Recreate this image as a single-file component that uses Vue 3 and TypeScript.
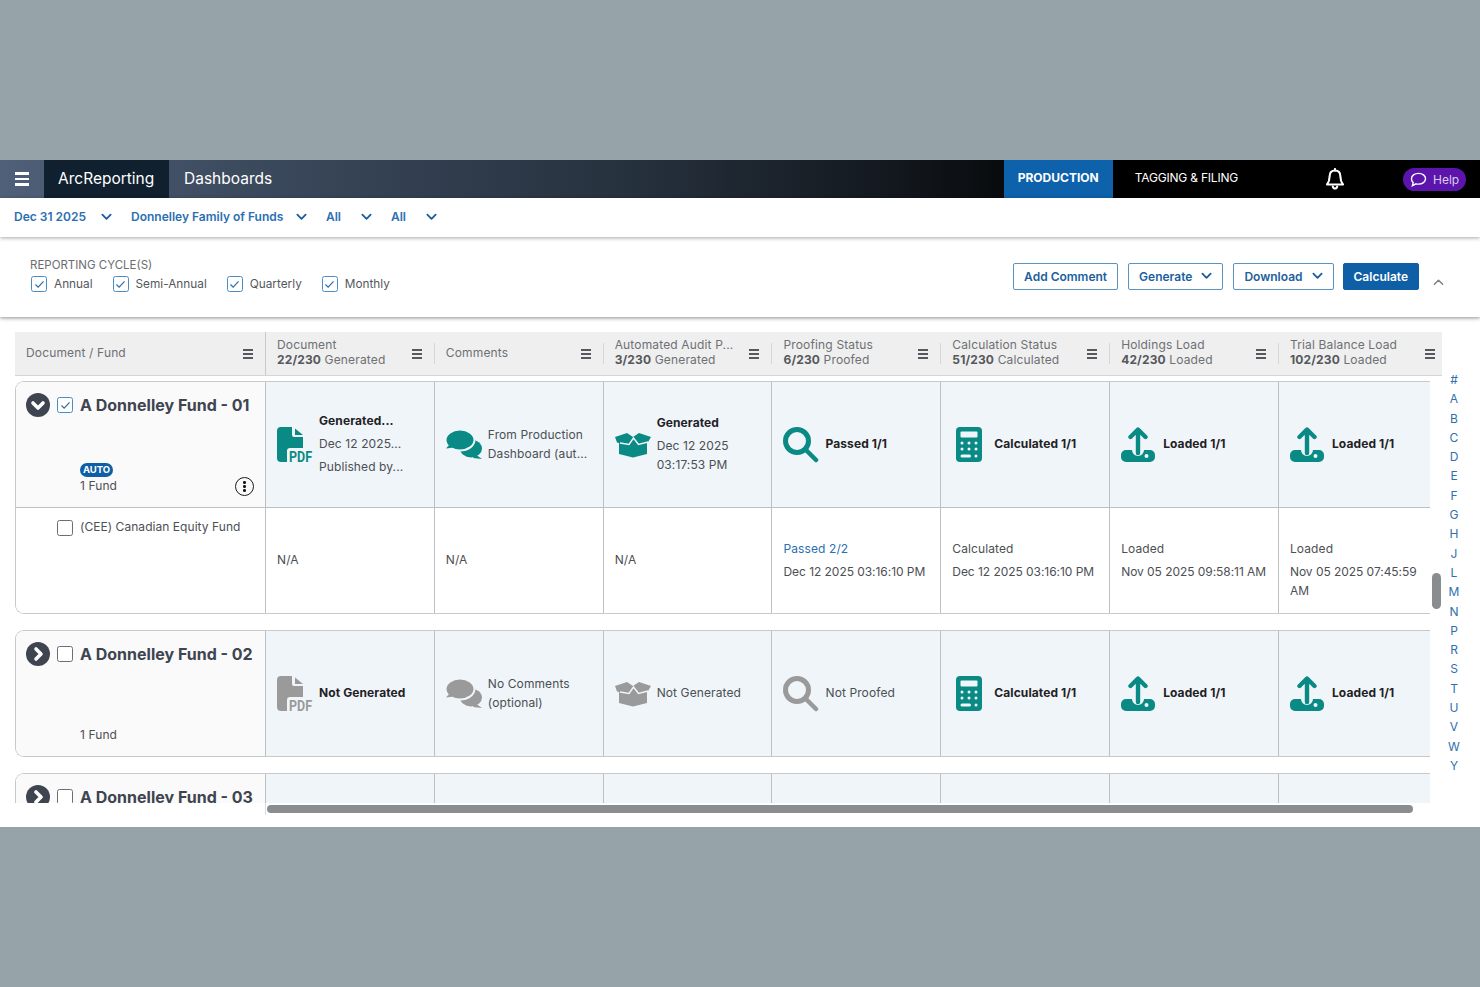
<template>
  <div class="page">
    <div class="band"></div>
    <div class="app">
      <nav class="topnav">
        <button class="burger" aria-label="Menu">
          <span></span><span></span><span></span>
        </button>
        <div class="brand">ArcReporting</div>
        <div class="nav-link">Dashboards</div>
        <div class="nav-right">
          <div class="tab active">PRODUCTION</div>
          <div class="tab">TAGGING &amp; FILING</div>
          <svg class="bell" viewBox="0 0 20 22" fill="none" stroke="#fff" stroke-width="2.100" stroke-linejoin="round">
            <path d="M10 2.500c-3.600 0-5.400 2.600-5.400 6 0 4.200-.9 5.900-2.600 8h16c-1.700-2.100-2.600-3.800-2.600-8 0-3.400-1.800-6-5.400-6z" />
            <path d="M10 1v1.500M7.800 18.500c.3 1.300 1.100 2 2.200 2s1.900-.7 2.200-2" stroke-linecap="round" />
          </svg>
          <div class="help">
            <svg viewBox="0 0 18 16" fill="none" stroke="#fff" stroke-width="1.500">
              <path d="M9 1.500c4.200 0 7.500 2.400 7.500 5.700S13.200 12.900 9 12.900c-.9 0-1.800-.1-2.600-.3L2.500 14.500l.8-3.200C2 10.200 1.500 8.800 1.500 7.200 1.500 3.900 4.800 1.500 9 1.500z" />
            </svg>
            Help
          </div>
        </div>
      </nav>

      <div class="filters">
        <div v-for="f in filters" :key="f.label + f.width" class="filter" :style="{ width: f.width + 'px' }">
          <span>{{ f.label }}</span>
          <svg class="chev" viewBox="0 0 12 8" fill="none" stroke="currentColor" stroke-width="2" stroke-linecap="round" stroke-linejoin="round"><path d="M1.500 1.500 6 6l4.500-4.500" /></svg>
        </div>
      </div>

      <div class="toolbar">
        <div class="cycles">
          <div class="cycle-title">REPORTING CYCLE(S)</div>
          <div class="cycle-list">
            <label v-for="c in cycles" :key="c" class="cycle">
              <span class="box checked">
                <svg viewBox="0 0 12 10" fill="none" stroke="currentColor" stroke-width="1.300"><path d="M1.500 5 4.500 8l6-6.500" /></svg>
              </span>
              {{ c }}
            </label>
          </div>
        </div>
        <div class="actions">
          <button class="btn">Add Comment</button>
          <button class="btn">Generate
            <svg class="chev" viewBox="0 0 12 8" fill="none" stroke="currentColor" stroke-width="2" stroke-linecap="round" stroke-linejoin="round"><path d="M1.500 1.500 6 6l4.500-4.500" /></svg>
          </button>
          <button class="btn">Download
            <svg class="chev" viewBox="0 0 12 8" fill="none" stroke="currentColor" stroke-width="2" stroke-linecap="round" stroke-linejoin="round"><path d="M1.500 1.500 6 6l4.500-4.500" /></svg>
          </button>
          <button class="btn primary">Calculate</button>
          <svg class="collapse" viewBox="0 0 12 8" fill="none" stroke="#7a7f85" stroke-width="1.600" stroke-linecap="round" stroke-linejoin="round"><path d="M1.500 6.500 6 2l4.500 4.500" /></svg>
        </div>
      </div>

      <div class="content">
        <div class="grid-area">
          <div class="grid-head">
            <div v-for="h in headers" :key="h.title" class="head-cell">
              <div class="head-text">
                <div class="head-title">{{ h.title }}</div>
                <div v-if="h.count" class="head-sub"><b>{{ h.count }}</b> {{ h.state }}</div>
              </div>
              <span class="head-menu"><i></i><i></i><i></i></span>
            </div>
          </div>

          <div class="grid-body">
            <div v-for="g in groups" :key="g.name" class="group">
              <div class="line parent">
                <div class="fund-cell">
                  <div class="fund-head">
                    <span class="toggle">
                      <svg viewBox="0 0 24 24" fill="none" stroke="#fff" stroke-width="3.600" stroke-linecap="round" stroke-linejoin="round">
                        <path :d="g.open ? 'M7 10l5 5 5-5' : 'M10 7l5 5-5 5'" />
                      </svg>
                    </span>
                    <span class="box" :class="{ checked: g.checked }">
                      <svg v-if="g.checked" viewBox="0 0 12 10" fill="none" stroke="currentColor" stroke-width="1.300"><path d="M1.500 5 4.500 8l6-6.500" /></svg>
                    </span>
                    <span class="fund-name">{{ g.name }}</span>
                  </div>
                  <div class="fund-meta">
                    <div>
                      <span v-if="g.auto" class="auto">AUTO</span>
                      <div class="fund-count">1 Fund</div>
                    </div>
                    <span v-if="g.auto" class="info"><i></i><i></i><i></i></span>
                  </div>
                </div>
                <div v-for="(c, i) in g.cells" :key="i" class="cell" :class="{ muted: c.muted }">
                  <div v-if="c.icon" class="icon-slot">
                    <svg v-if="c.icon === 'pdf'" class="pdf" width="42" height="40" viewBox="0 0 42 40" fill="currentColor">
                      <path d="M4 0H15V8a2 2 0 0 0 2 2H26V21H13a3 3 0 0 0-3 3V35H4a4 4 0 0 1-4-4V4a4 4 0 0 1 4-4z" />
                      <path d="M18 1.500 26 8H18z" />
                      <text x="12" y="35" font-family="'Roboto',sans-serif" font-size="14.500" font-weight="700" textLength="23" lengthAdjust="spacingAndGlyphs">PDF</text>
                    </svg>
                    <svg v-else-if="c.icon === 'chat'" width="36" height="29" viewBox="0 0 36 29" fill="currentColor">
                      <ellipse cx="25" cy="18.500" rx="11" ry="9" />
                      <path d="M29 24l7 5-9-1z" />
                      <ellipse class="cut" cx="14" cy="10" rx="14.500" ry="10.500" />
                      <path d="M4 14 0 18.500l8-1z" />
                    </svg>
                    <svg v-else-if="c.icon === 'box'" width="36" height="26" viewBox="0 0 36 26" fill="currentColor">
                      <path d="M0 5 12 1l6 4 6-4 12 4-3 5-1 .3V22l-14 3.500L4 22V11l-2-.5z" />
                      <path class="crease" d="M5 11l9 1.500L18.500 6l5 6.500 9.500-2.500" />
                    </svg>
                    <svg v-else-if="c.icon === 'search'" width="36" height="36" viewBox="0 0 36 36" fill="none" stroke="currentColor">
                      <circle cx="14" cy="14" r="11.500" stroke-width="5" />
                      <path d="M23.500 23.500 33 33" stroke-width="4.500" stroke-linecap="round" />
                    </svg>
                    <svg v-else-if="c.icon === 'calc'" class="calc" width="26" height="35" viewBox="0 0 26 35" fill="currentColor">
                      <rect width="26" height="35" rx="4" />
                      <rect x="4.500" y="4.500" width="17" height="6" rx="1" class="hole" />
                      <g class="hole">
                        <circle cx="6" cy="16" r="1.500" /><circle cx="13" cy="16" r="1.500" /><circle cx="20" cy="16" r="1.500" />
                        <circle cx="6" cy="22" r="1.500" /><circle cx="13" cy="22" r="1.500" /><circle cx="20" cy="22" r="1.500" />
                        <rect x="4.500" y="27.500" width="10.500" height="3" rx="1.500" /><circle cx="20" cy="29" r="1.500" />
                      </g>
                    </svg>
                    <svg v-else-if="c.icon === 'upload'" width="34" height="35" viewBox="0 0 34 35" fill="currentColor">
                      <path d="M5 23h6a6 6 0 0 0 12 0h6a5 5 0 0 1 5 5v2a5 5 0 0 1-5 5H5a5 5 0 0 1-5-5v-2a5 5 0 0 1 5-5z" />
                      <circle cx="25.500" cy="29" r="2" class="hole" />
                      <path d="M17 26V3M9.500 10 17 2.500 24.500 10" fill="none" stroke="currentColor" stroke-width="4.400" stroke-linecap="round" stroke-linejoin="round" />
                    </svg>
                  </div>
                  <div class="cell-text" :class="c.kind">
                    <div v-for="(t, j) in c.lines" :key="j">{{ t }}</div>
                  </div>
                </div>
              </div>

              <div v-if="g.children" class="line child">
                <div class="fund-cell sub">
                  <span class="box"></span>
                  <span>(CEE) Canadian Equity Fund</span>
                </div>
                <div v-for="(c, i) in g.children" :key="i" class="cell plain">
                  <div v-if="c.length === 1" class="single">{{ c[0] }}</div>
                  <div v-else class="stack">
                    <div class="stack-top" :class="{ link: c[0].startsWith('Passed') }">{{ c[0] }}</div>
                    <div class="stamp">{{ c[1] }}</div>
                  </div>
                </div>
              </div>
            </div>
          </div>

          <div class="vthumb"></div>
          <div class="hscroll"><div class="hthumb"></div></div>
        </div>

        <div class="alpha">
          <span v-for="a in letters" :key="a">{{ a }}</span>
        </div>
      </div>
    </div>
    <div class="band"></div>
  </div>
</template>

<script setup lang="ts">
type IconName = 'pdf' | 'chat' | 'box' | 'search' | 'calc' | 'upload'

interface Cell {
  icon?: IconName
  lines: string[]
  kind?: string
  muted?: boolean
}

interface Group {
  name: string
  open: boolean
  checked: boolean
  auto: boolean
  cells: Cell[]
  children?: string[][]
}

const filters = [
  { label: 'Dec 31 2025', width: 117 },
  { label: 'Donnelley Family of Funds', width: 195 },
  { label: 'All', width: 65 },
  { label: 'All', width: 65 },
]

const cycles = ['Annual', 'Semi-Annual', 'Quarterly', 'Monthly']

const headers = [
  { title: 'Document / Fund' },
  { title: 'Document', count: '22/230', state: 'Generated' },
  { title: 'Comments' },
  { title: 'Automated Audit P...', count: '3/230', state: 'Generated' },
  { title: 'Proofing Status', count: '6/230', state: 'Proofed' },
  { title: 'Calculation Status', count: '51/230', state: 'Calculated' },
  { title: 'Holdings Load', count: '42/230', state: 'Loaded' },
  { title: 'Trial Balance Load', count: '102/230', state: 'Loaded' },
]

const loadedCells: Cell[] = [
  { icon: 'calc', lines: ['Calculated 1/1'], kind: 'bold' },
  { icon: 'upload', lines: ['Loaded 1/1'], kind: 'bold' },
  { icon: 'upload', lines: ['Loaded 1/1'], kind: 'bold' },
]

const groups: Group[] = [
  {
    name: 'A Donnelley Fund - 01',
    open: true,
    checked: true,
    auto: true,
    cells: [
      { icon: 'pdf', lines: ['Generated...', 'Dec 12 2025...', 'Published by...'], kind: 'first-bold wide' },
      { icon: 'chat', lines: ['From Production', 'Dashboard (aut...'] },
      { icon: 'box', lines: ['Generated', 'Dec 12 2025', '03:17:53 PM'], kind: 'first-bold' },
      { icon: 'search', lines: ['Passed 1/1'], kind: 'bold' },
      ...loadedCells,
    ],
    children: [
      ['N/A'],
      ['N/A'],
      ['N/A'],
      ['Passed 2/2', 'Dec 12 2025 03:16:10 PM'],
      ['Calculated', 'Dec 12 2025 03:16:10 PM'],
      ['Loaded', 'Nov 05 2025 09:58:11 AM'],
      ['Loaded', 'Nov 05 2025 07:45:59 AM'],
    ],
  },
  {
    name: 'A Donnelley Fund - 02',
    open: false,
    checked: false,
    auto: false,
    cells: [
      { icon: 'pdf', lines: ['Not Generated'], kind: 'bold', muted: true },
      { icon: 'chat', lines: ['No Comments', '(optional)'], muted: true },
      { icon: 'box', lines: ['Not Generated'], muted: true },
      { icon: 'search', lines: ['Not Proofed'], muted: true },
      ...loadedCells,
    ],
  },
  {
    name: 'A Donnelley Fund - 03',
    open: false,
    checked: false,
    auto: false,
    cells: Array.from({ length: 7 }, () => ({ lines: [] })),
  },
]

const letters = '# A B C D E F G H J L M N P R S T U V W Y'.split(' ')
</script>

<style>
html,
body {
  margin: 0;
  background: #96a4aa;
}
</style>

<style scoped>
.page {
  display: flex;
  flex-direction: column;
  height: 987px;
  font-family: Inter, "Liberation Sans", sans-serif;
  color: #3d4046;
}

.band {
  height: 160px;
  background: #96a4aa;
}

.app {
  height: 667px;
  background: #fff;
  display: flex;
  flex-direction: column;
  overflow: hidden;
}

.topnav {
  height: 38px;
  flex: none;
  display: flex;
  align-items: stretch;
  color: #fff;
  background: linear-gradient(90deg, #4f6079 0, #3c4a5e 240px, #27323f 620px, #12171d 900px, #000 1100px);
}

.burger {
  width: 44px;
  border: none;
  background: none;
  padding: 0 0 0 15px;
  display: flex;
  flex-direction: column;
  justify-content: center;
  gap: 3px;
}

.burger span {
  display: block;
  width: 14px;
  height: 2.500px;
  background: #fff;
}

.brand {
  width: 125px;
  padding-left: 14px;
  box-sizing: border-box;
  background: #10202f;
  font-size: 15.500px;
  line-height: 37px;
}

.nav-link {
  padding-left: 15px;
  font-size: 15.500px;
  line-height: 37px;
}

.nav-right {
  margin-left: auto;
  display: flex;
  align-items: center;
  height: 100%;
}

.tab {
  width: 109px;
  font-size: 12px;
  line-height: 36px;
  height: 100%;
  text-align: center;
}

.tab.active {
  background: #0e61ab;
  font-weight: 700;
}

.tab:not(.active) {
  width: auto;
  margin-left: 22px;
  letter-spacing: -0.200px;
}

.bell {
  width: 20px;
  height: 22px;
  margin-left: 87px;
}

.help {
  margin: 0 14px 0 58px;
  width: 63px;
  height: 23px;
  box-sizing: border-box;
  padding-left: 7px;
  border-radius: 12px;
  background: #5c14ad;
  display: flex;
  align-items: center;
  gap: 6px;
  font-size: 12px;
  color: #d9cdea;
}

.help svg {
  width: 17px;
  height: 15px;
}

.filters {
  position: relative;
  z-index: 2;
  height: 39px;
  flex: none;
  box-sizing: border-box;
  padding: 0 0 2px 14px;
  display: flex;
  align-items: center;
  background: #fff;
  box-shadow: 0 1px 4px rgba(0, 0, 0, 0.35);
}

.filter {
  display: flex;
  align-items: center;
  justify-content: space-between;
  box-sizing: border-box;
  padding-right: 19px;
  font-size: 12px;
  font-weight: 600;
  color: #2a6fb2;
}

.chev {
  width: 11px;
  height: 8px;
  color: #1c5c9c;
}

.toolbar {
  position: relative;
  z-index: 1;
  height: 80px;
  flex: none;
  box-sizing: border-box;
  padding: 21px 36px 0 30px;
  display: flex;
  justify-content: space-between;
  background: #fff;
  box-shadow: 0 1px 4px rgba(0, 0, 0, 0.45);
}

.cycle-title {
  font-size: 11.500px;
  color: #6b6d70;
  line-height: 14px;
}

.cycle-list {
  display: flex;
  margin-top: 4px;
  margin-left: 1px;
}

.cycle {
  display: flex;
  align-items: center;
  gap: 7px;
  font-size: 11.800px;
  color: #55585c;
  margin-right: 20px;
}

.box {
  width: 14px;
  height: 14px;
  flex: none;
  border: 1.500px solid #6b6e72;
  border-radius: 2.500px;
  display: inline-flex;
  align-items: center;
  justify-content: center;
  background: #fff;
}

.box.checked {
  border-color: #4a8cc4;
  color: #2c6da8;
}

.box svg {
  width: 11px;
  height: 9px;
}

.actions {
  display: flex;
  align-items: flex-start;
  gap: 10px;
  margin-top: 5px;
}

.btn {
  height: 27px;
  padding: 0 10px 1px;
  display: inline-flex;
  align-items: center;
  gap: 9px;
  font-family: inherit;
  font-size: 12px;
  font-weight: 600;
  color: #1c5f9f;
  background: #fff;
  border: 1px solid #5a93bf;
  border-radius: 2px;
}

.btn.primary {
  margin-left: -1px;
  background: #0e5fa6;
  border-color: #0e5fa6;
  color: #fff;
}

.collapse {
  width: 11px;
  height: 8px;
  margin: 15px 0 0 4px;
}

.content {
  flex: 1;
  display: flex;
  min-height: 0;
}

.grid-area {
  position: relative;
  width: 1442px;
  flex: none;
  box-sizing: border-box;
  padding: 15px 0 0 15px;
}

.grid-head {
  height: 44px;
  display: grid;
  grid-template-columns: 250px repeat(7, 168.830px);
  overflow: hidden;
  background: #efefef;
  border-bottom: 1px solid #d6d6d6;
  box-sizing: border-box;
}

.head-cell {
  display: flex;
  align-items: center;
  justify-content: space-between;
  padding: 0 12px 0 12px;
  min-width: 0;
  position: relative;
}

.head-cell:first-child {
  padding-left: 11px;
}

.head-cell + .head-cell::before {
  content: '';
  position: absolute;
  left: 0;
  top: 11px;
  bottom: 11px;
  width: 1px;
  background: #d6d6d6;
}

.head-cell:nth-child(2)::before {
  top: 0;
  bottom: 0;
  background: #c9c9c9;
}

.head-text {
  font-size: 12px;
  line-height: 15px;
  letter-spacing: 0.150px;
  color: #6d7074;
  white-space: nowrap;
  padding-bottom: 3px;
}

.head-sub b {
  font-weight: 700;
  color: #55585c;
}

.head-menu {
  display: flex;
  flex-direction: column;
  gap: 2px;
  flex: none;
}

.head-menu i {
  display: block;
  width: 10px;
  height: 2px;
  background: #55585c;
}

.grid-body {
  width: 1415px;
  height: 422px;
  margin-top: 5px;
  overflow: hidden;
  display: flex;
  flex-direction: column;
  gap: 16px;
}

.group {
  flex: none;
  border: 1px solid #c7c9ca;
  border-right: none;
  border-radius: 9px 0 0 9px;
  overflow: hidden;
}

.line {
  display: grid;
  grid-template-columns: 250px repeat(7, 168.830px);
}

.parent {
  height: 125px;
}

.child {
  height: 106px;
  box-sizing: border-box;
  border-top: 1px solid #bdbfc0;
}

.fund-cell {
  box-sizing: border-box;
  padding: 11px 11px 13px 10px;
  background: #fafafa;
  display: flex;
  flex-direction: column;
  justify-content: space-between;
  border-right: 1px solid #bdbfc0;
}

.fund-cell.sub {
  background: #fff;
  flex-direction: row;
  justify-content: flex-start;
  align-items: flex-start;
  gap: 7px;
  padding: 11px 0 0 41px;
  font-size: 12px;
  letter-spacing: 0.050px;
  line-height: 15px;
  color: #4c4f53;
}

.fund-cell.sub .box {
  margin-top: 1px;
}

.fund-head {
  display: flex;
  align-items: center;
}

.toggle {
  width: 24px;
  height: 24px;
  border-radius: 50%;
  background: #3e4450;
  flex: none;
  margin-right: 7px;
}

.toggle svg {
  width: 24px;
  height: 24px;
  display: block;
}

.fund-name {
  margin-left: 7px;
  font-size: 16px;
  font-weight: 700;
  color: #3e4450;
  white-space: nowrap;
}

.fund-meta {
  display: flex;
  align-items: flex-end;
  justify-content: space-between;
  padding-left: 54px;
}

.auto {
  display: block;
  width: 33px;
  height: 14px;
  border-radius: 7px;
  background: #0e5fa6;
  color: #fff;
  font-size: 9.500px;
  font-weight: 700;
  line-height: 14px;
  text-align: center;
}

.fund-count {
  font-size: 12px;
  letter-spacing: 0.100px;
  line-height: 17px;
  color: #4c4f53;
}

.info {
  width: 19px;
  height: 19px;
  margin-bottom: -2px;
  box-sizing: border-box;
  border: 1.800px solid #1a1a1a;
  border-radius: 50%;
  display: flex;
  flex-direction: column;
  align-items: center;
  justify-content: center;
  gap: 1.500px;
}

.info i {
  width: 2.500px;
  height: 2.500px;
  border-radius: 50%;
  background: #1a1a1a;
}

.cell {
  box-sizing: border-box;
  background: #eff5f9;
  border-right: 1px solid #bdbfc0;
  padding-left: 11px;
  display: flex;
  align-items: center;
  color: #0a8a84;
  min-width: 0;
}

.cell.muted {
  color: #9a9a9a;
}

.cell:last-child {
  border-right: none;
}

.icon-slot {
  width: 42px;
  flex: none;
  display: flex;
  align-items: center;
}

.icon-slot svg {
  display: block;
}

.pdf {
  margin-bottom: -4px;
}

.calc {
  margin-left: 4px;
}

.cut {
  stroke: #eff5f9;
  stroke-width: 2;
}

.crease {
  fill: none;
  stroke: #eff5f9;
  stroke-width: 1.500;
}

.hole {
  fill: #eff5f9;
}

.cell-text {
  font-size: 12px;
  letter-spacing: 0.100px;
  line-height: 19px;
  color: #4c4f53;
  white-space: nowrap;
  padding-bottom: 2px;
}

.cell-text.bold {
  font-weight: 700;
  color: #1f2124;
}

.first-bold > div:first-child {
  font-weight: 700;
  color: #1f2124;
  margin-bottom: 4px;
}

.wide > div + div + div {
  margin-top: 4px;
}

.cell.plain {
  background: #fff;
  font-size: 12px;
  letter-spacing: 0.100px;
  line-height: 19px;
  color: #4c4f53;
  padding-right: 8px;
}

.cell.plain:last-child {
  padding-right: 24px;
}

.single {
  padding-bottom: 2px;
}

.stack {
  align-self: flex-start;
  margin-top: 31px;
}

.stack-top {
  margin-bottom: 4px;
}

.stamp {
  letter-spacing: -0.050px;
}

.link {
  color: #2a6fb2;
}

.vthumb {
  position: absolute;
  left: 1432px;
  top: 256px;
  width: 9px;
  height: 36px;
  border-radius: 5px;
  background: #8a8d8f;
}

.hscroll {
  height: 12px;
  margin-left: 250px;
  padding-top: 2px;
  box-sizing: border-box;
  border-left: 1px solid #dcdcdc;
}

.hthumb {
  width: 1146px;
  height: 8px;
  margin-left: 1px;
  border-radius: 4px;
  background: #8a8d8f;
}

.alpha {
  flex: 1;
  padding-top: 53px;
  display: flex;
  flex-direction: column;
  align-items: center;
  font-size: 12px;
  line-height: 19.300px;
  color: #2f6fb0;
  padding-right: 14px;
}
</style>
